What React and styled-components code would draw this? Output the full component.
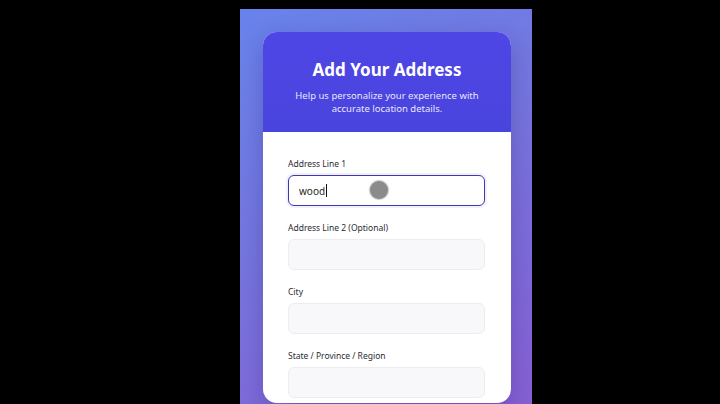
import styled, { createGlobalStyle } from 'styled-components';

const GlobalStyle = createGlobalStyle`
  html, body {
    margin: 0;
    padding: 0;
    background: #000;
    height: 100%;
    overflow: hidden;
  }
  body {
    font-family: "Noto Sans", "Open Sans", sans-serif;
  }
`;

const Page = styled.div`
  display: flex;
  justify-content: center;
  height: 404px;
  padding-left: 52px;
  box-sizing: border-box;
`;

const Screen = styled.div`
  width: 292px;
  margin-top: 9px;
  height: 395px;
  padding: 23px 21px 0 23px;
  box-sizing: border-box;
  background: linear-gradient(150deg, #6883ec 0%, #7477e0 40%, #8760d4 100%);
  overflow: hidden;
`;

const Card = styled.div`
  background: #fff;
  border-radius: 14px;
  overflow: hidden;
  height: 371px;
  box-shadow: 0 8px 24px rgba(30, 20, 90, 0.25);
`;

const Header = styled.div`
  height: 100px;
  box-sizing: border-box;
  padding-top: 26px;
  background: linear-gradient(180deg, #4e46e5 0%, #4a44de 100%);
  color: #fff;
  text-align: center;
`;

const Title = styled.h1`
  margin: 0;
  font-size: 17px;
  line-height: 24px;
  font-weight: 700;
`;

const Subtitle = styled.p`
  margin: 7px auto 0;
  width: 200px;
  font-size: 9.5px;
  line-height: 13px;
  color: rgba(255, 255, 255, 0.9);
`;

const Body = styled.div`
  padding: 26px 26px 0 25px;
  display: flex;
  flex-direction: column;
  gap: 16px;
`;

const Field = styled.div`
  display: flex;
  flex-direction: column;
  gap: 5px;
`;

const Label = styled.label`
  font-size: 8.5px;
  line-height: 12px;
  color: #2b2b33;
`;

const Input = styled.div`
  position: relative;
  height: 31px;
  box-sizing: border-box;
  border-radius: 6px;
  display: flex;
  align-items: center;
  padding-left: ${({ $focused }) => ($focused ? '10px' : '11px')};
  font-size: 10px;
  color: #1f1f24;
  background: ${({ $focused }) => ($focused ? '#fff' : '#f8f8fa')};
  border: ${({ $focused }) => ($focused ? '1.5px solid #3f38b0' : '1px solid #ededf1')};
  box-shadow: ${({ $focused }) => ($focused ? '0 0 0 2px rgba(79, 70, 229, 0.08)' : 'none')};
`;

const Caret = styled.span`
  display: inline-block;
  width: 1px;
  height: 13px;
  background: #111;
  margin-left: 1px;
`;

const Touch = styled.span`
  position: absolute;
  left: 81px;
  top: 5px;
  width: 18px;
  height: 18px;
  border-radius: 50%;
  background: #8b8b8b;
  box-shadow: 0 0 1px 1px rgba(139, 139, 139, 0.5);
`;

const FIELDS = [
  { name: 'line1', label: 'Address Line 1', value: 'wood', focused: true },
  { name: 'line2', label: 'Address Line 2 (Optional)' },
  { name: 'city', label: 'City' },
  { name: 'state', label: 'State / Province / Region' },
];

const App = () => (
  <Page>
    <GlobalStyle />
    <Screen>
      <Card>
        <Header>
          <Title>Add Your Address</Title>
          <Subtitle>Help us personalize your experience with accurate location details.</Subtitle>
        </Header>
        <Body>
          {FIELDS.map(({ name, label, value, focused }) => (
            <Field key={name}>
              <Label>{label}</Label>
              <Input $focused={focused}>
                {value}
                {focused && <Caret />}
                {focused && <Touch />}
              </Input>
            </Field>
          ))}
        </Body>
      </Card>
    </Screen>
  </Page>
);

export default App;
